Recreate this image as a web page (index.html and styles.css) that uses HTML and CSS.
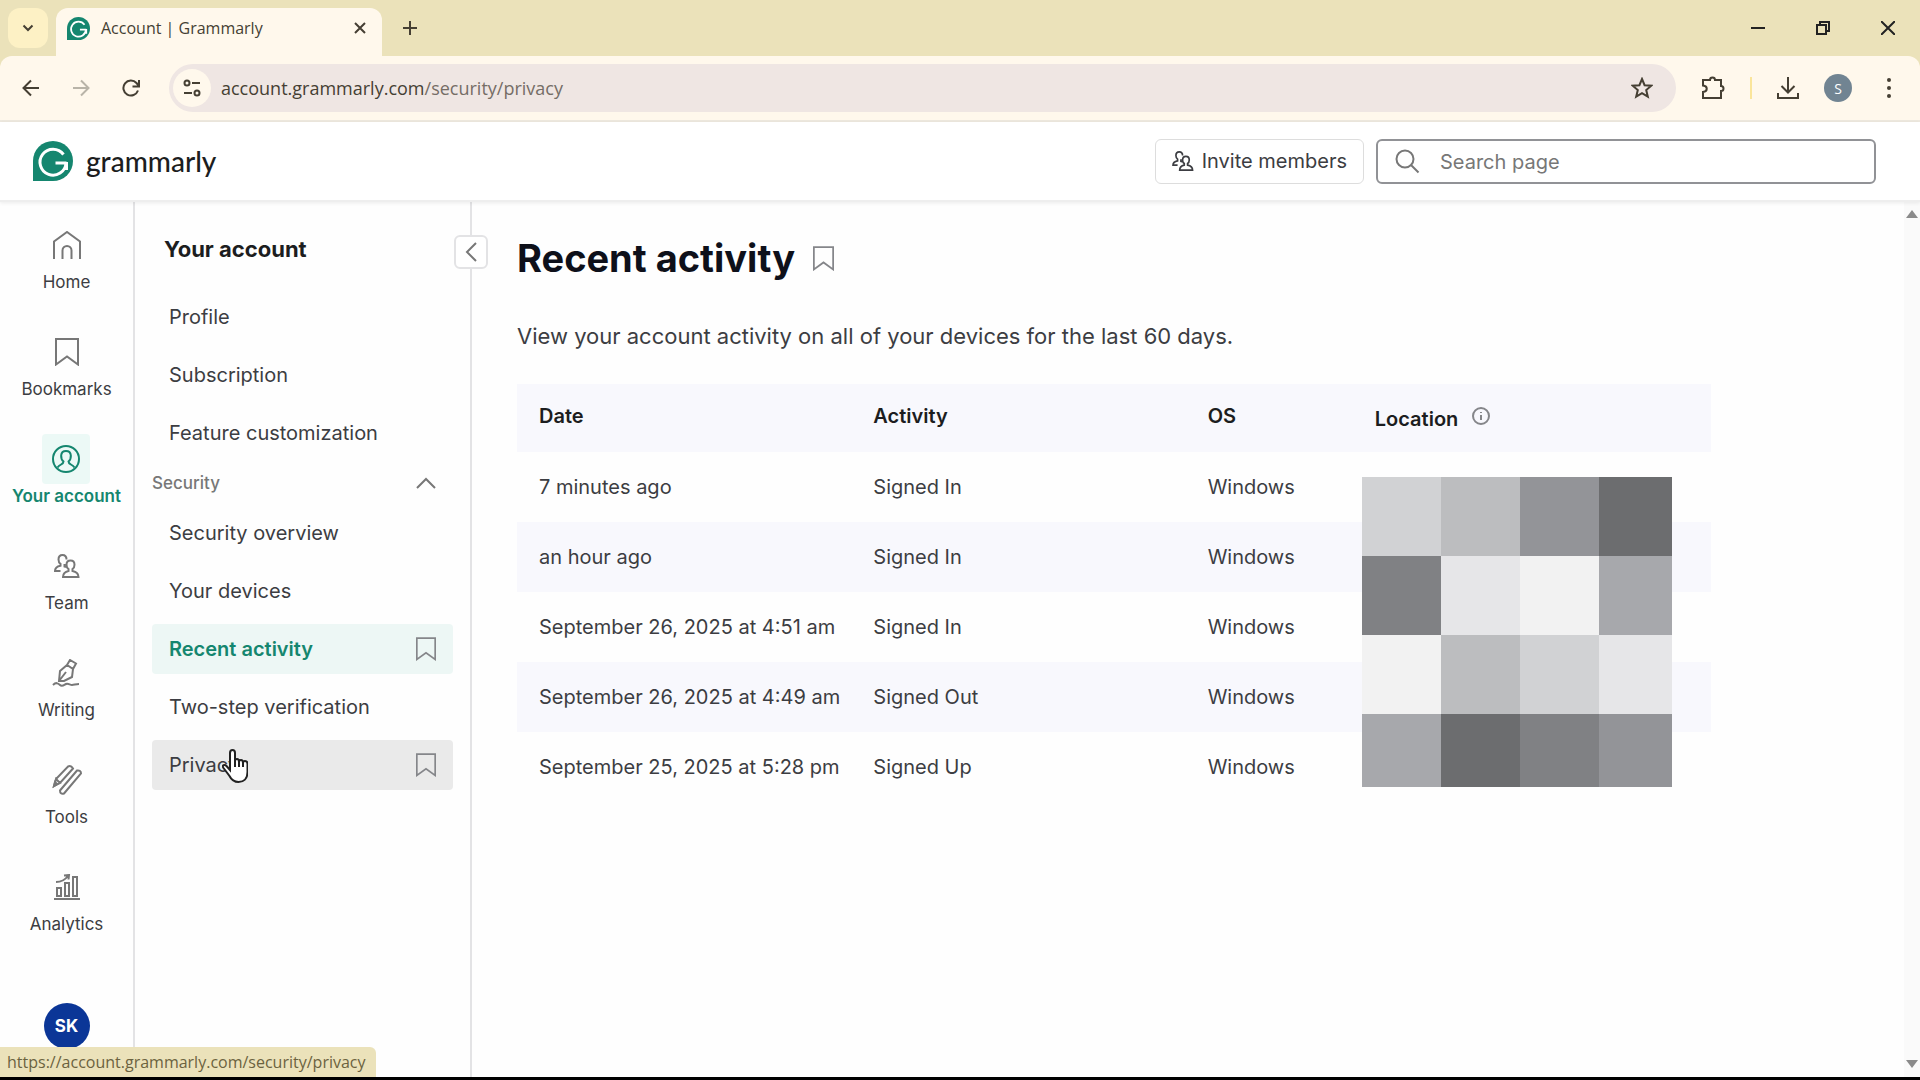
FILE: index.html
```
<!DOCTYPE html>
<html lang="en">
  <head>
    <meta charset="UTF-8" />
    <meta name="viewport" content="width=device-width, initial-scale=1.0" />
    <title>Account | Grammarly</title>
    <link rel="stylesheet" href="styles.css">
  </head>
  <body>
    <!-- shared icons -->
    <svg class="sprite" aria-hidden="true">
      <symbol id="logo" viewBox="0 0 40 40">
        <path d="M0 40V20a20 20 0 1 1 20 20z" fill="#15866f" stroke="none" />
        <path
          d="M30.500 13.500A13 13 0 1 0 33 22M22.500 22H33.500M33.500 21v8"
          fill="none"
          stroke="#fff"
          stroke-width="3"
        />
      </symbol>
      <symbol id="bookmark" viewBox="0 0 24 28">
        <path d="M1 1h22v25.500l-11-8-11 8z" />
      </symbol>
      <symbol id="team" viewBox="0 0 26 24">
        <path d="M12.500 5.500C12.500 2.500 11 1 8.500 1S4.500 2.500 4.500 5.500c0 2 .8 3.500 2 4.300v2C3 12.500 1 14 1 17h5.500M16.500 6.500c-2.600 0-4 1.600-4 4.300 0 2.200.8 3.500 2 4.200v2c-3.500.7-5.500 2.500-5.500 6h15.500c0-3.500-2.500-5.300-6-6v-2c1.200-.7 2-2 2-4.200 0-2.700-1.400-4.300-4-4.300zM10.500 10v2.500l1.500.5" />
      </symbol>
    </svg>

    <div class="browser">
      <div class="tabstrip">
        <button class="tab-search" aria-label="Search tabs">
          <svg width="12" height="8" viewBox="0 0 12 8"><path d="M1.500 1.500 6 6l4.500-4.500" /></svg>
        </button>
        <div class="tab">
          <svg class="favicon" width="23" height="23"><use href="#logo" /></svg>
          <span class="tab-title">Account | Grammarly</span>
          <button class="tab-close" aria-label="Close tab">
            <svg width="12" height="12" viewBox="0 0 12 12"><path d="M1 1l10 10M11 1 1 11" /></svg>
          </button>
        </div>
        <button class="new-tab" aria-label="New tab">
          <svg width="16" height="16" viewBox="0 0 16 16"><path d="M8 1v14M1 8h14" /></svg>
        </button>
        <div class="window-controls">
          <button aria-label="Minimize">
            <svg width="14" height="14" viewBox="0 0 14 14"><path d="M0 7h14" /></svg>
          </button>
          <button aria-label="Restore">
            <svg width="14" height="14" viewBox="0 0 14 14"><path d="M1 4h9v9H1zM4 4V1h9v9h-3" /></svg>
          </button>
          <button aria-label="Close">
            <svg width="14" height="14" viewBox="0 0 14 14"><path d="M0 0l14 14M14 0 0 14" /></svg>
          </button>
        </div>
      </div>

      <div class="toolbar">
        <div class="nav-buttons">
          <button aria-label="Back">
            <svg width="18" height="18" viewBox="0 0 18 18"><path d="M17 9H2M9 1.500 1.500 9 9 16.500" /></svg>
          </button>
          <button class="forward" aria-label="Forward">
            <svg width="18" height="18" viewBox="0 0 18 18"><path d="M1 9h15M9 1.500 16.500 9 9 16.500" /></svg>
          </button>
          <button aria-label="Reload">
            <svg width="18" height="18" viewBox="0 0 18 18"><path d="M16 11.500A7.500 7.500 0 1 1 14.500 4L17 7M17 1v6.500h-6.500" /></svg>
          </button>
        </div>
        <div class="address">
          <button class="site-info" aria-label="View site information">
            <svg width="18" height="18" viewBox="0 0 18 18"><circle cx="4" cy="4" r="2.500" /><path d="M9 4h8M1 14h8" /><circle cx="14" cy="14" r="2.500" /></svg>
          </button>
          <span class="url">account.grammarly.com<span class="path">/security/privacy</span></span>
          <button class="star" aria-label="Bookmark this tab">
            <svg width="22" height="22" viewBox="0 0 22 22"><path d="M11 2l2.600 6.200 6.700.5-5.100 4.400 1.600 6.500-5.800-3.500-5.800 3.500 1.600-6.500-5.100-4.400 6.700-.5z" /></svg>
          </button>
        </div>
        <div class="toolbar-actions">
          <button aria-label="Extensions">
            <svg width="25" height="24" viewBox="0 0 25 24"><path d="M2 4h7a2.500 2.500 0 0 1 5 0h6v6a2.500 2.500 0 0 1 0 5v7H2v-6c5-.5 5-6 0-6.500z" /></svg>
          </button>
          <span class="divider"></span>
          <button aria-label="Downloads">
            <svg width="24" height="24" viewBox="0 0 24 24"><path d="M12 1v15M5.500 10l6.500 6.500 6.500-6.500M2 17v5h20v-5" /></svg>
          </button>
          <button class="profile" aria-label="Profile">S</button>
          <button aria-label="Menu">
            <svg class="dots" width="6" height="22" viewBox="0 0 6 22"><circle cx="3" cy="3" r="2" /><circle cx="3" cy="11" r="2" /><circle cx="3" cy="19" r="2" /></svg>
          </button>
        </div>
      </div>
    </div>

    <header class="header">
      <a class="brand" href="#">
        <svg width="40" height="40"><use href="#logo" /></svg>
        <span>grammarly</span>
      </a>
      <div class="header-actions">
        <button class="invite">
          <svg width="22" height="20"><use href="#team" /></svg>
          Invite members
        </button>
        <label class="search">
          <svg width="25" height="25" viewBox="0 0 25 25"><circle cx="10" cy="10" r="8.500" /><path d="M16 16l7.500 7.500" /></svg>
          <input type="text" placeholder="Search page" aria-label="Search page" />
        </label>
      </div>
    </header>

    <div class="layout">
      <nav class="rail">
        <a href="#">
          <span class="rail-icon"><svg width="28" height="28" viewBox="0 0 28 28"><path d="M1 28V10.500L14 1l13 9.500V28M9.500 28v-8.500a4.500 4.500 0 0 1 9 0V28" /></svg></span>
          Home
        </a>
        <a href="#">
          <span class="rail-icon"><svg width="24" height="28"><use href="#bookmark" /></svg></span>
          Bookmarks
        </a>
        <a href="#" class="active">
          <span class="rail-icon"><svg width="28" height="28" viewBox="0 0 28 28"><circle cx="14" cy="14" r="13" /><path d="M14 6c-6.500 0-5.500 8-2.500 10.500 0 3-3.500 2.500-6 6M14 6c6.500 0 5.500 8 2.500 10.500 0 3 3.500 2.500 6 6" /></svg></span>
          Your account
        </a>
        <a href="#">
          <span class="rail-icon"><svg width="26" height="24"><use href="#team" /></svg></span>
          Team
        </a>
        <a href="#">
          <span class="rail-icon"><svg width="28" height="28" viewBox="0 0 28 28"><path d="M7 22 8 12l7-6 6 4-1 8-8 4zM7 22l7-9M15 6l3-5 6 3.500-3 5.500M1 26c3-3 5-2 7 0s4 0 6-1 4 1 6 1 4-1 7-1" /></svg></span>
          Writing
        </a>
        <a href="#">
          <span class="rail-icon"><svg width="30" height="30" viewBox="0 0 30 30"><path d="M2 21 4 14 16 1.500q3-1.500 5 2L8 18zM2 21l2-7 4 4zM8 25.500 25 5.500q4-.5 4 3L12 28.500q-4 1-4-3z" /><path d="M2 21l1-4 2 2z" fill="#777" /></svg></span>
          Tools
        </a>
        <a href="#">
          <span class="rail-icon"><svg width="26" height="26" viewBox="0 0 26 26"><path d="M0 25h26M3 14h4v8H3zM11 9h4v13h-4zM19 3h4v19h-4zM2 8c5 0 9-2 12-6M10 1.500l5-.5-.5 4.500" /></svg></span>
          Analytics
        </a>
        <button class="avatar">SK</button>
      </nav>

      <nav class="subnav">
        <button class="collapse" aria-label="Collapse menu">
          <svg width="12" height="20" viewBox="0 0 12 20"><path d="M11 1 2 10l9 9" /></svg>
        </button>
        <h2>Your account</h2>
        <div class="links">
          <a href="#">Profile</a>
          <a href="#">Subscription</a>
          <a href="#">Feature customization</a>
        </div>
        <button class="section">
          Security
          <svg width="20" height="12" viewBox="0 0 20 12"><path d="M1 11l9-9 9 9" /></svg>
        </button>
        <div class="links">
          <a href="#">Security overview</a>
          <a href="#">Your devices</a>
          <a href="#" class="current">
            Recent activity
            <svg width="20" height="24"><use href="#bookmark" /></svg>
          </a>
          <a href="#">Two-step verification</a>
          <a href="#" class="hovered">
            Privacy
            <svg width="20" height="24"><use href="#bookmark" /></svg>
            <svg class="pointer" width="26" height="34" viewBox="0 0 26 34">
              <path
                d="M8 21V4q0-3 2.500-3T13 4v8q0-2 2-2t2 3q0-2 2-2t2 3q0-2 2-2 2.500 0 2.500 3v8c0 7-4 10-9 10s-7-2-9-6l-6-8c-2-3 1-4 3-2z"
                fill="#fff"
                stroke="#222"
              />
              <path d="M13 12v6M17 13v5M21 14v4" stroke="#222" />
            </svg>
          </a>
        </div>
      </nav>

      <main class="content">
        <div class="title">
          <h1>Recent activity</h1>
          <button aria-label="Bookmark page">
            <svg width="21" height="25"><use href="#bookmark" /></svg>
          </button>
        </div>
        <p class="intro">View your account activity on all of your devices for the last 60 days.</p>
        <div class="activity">
          <table>
            <thead>
              <tr>
                <th class="col-date">Date</th>
                <th class="col-activity">Activity</th>
                <th class="col-os">OS</th>
                <th>
                  <span class="location">
                    Location
                    <svg width="18" height="18" viewBox="0 0 18 18"><circle cx="9" cy="9" r="8" /><path d="M9 8v5M9 5v1" /></svg>
                  </span>
                </th>
              </tr>
            </thead>
            <tbody>
              <tr><td>7 minutes ago</td><td>Signed In</td><td>Windows</td><td></td></tr>
              <tr><td>an hour ago</td><td>Signed In</td><td>Windows</td><td></td></tr>
              <tr><td>September 26, 2025 at 4:51 am</td><td>Signed In</td><td>Windows</td><td></td></tr>
              <tr><td>September 26, 2025 at 4:49 am</td><td>Signed Out</td><td>Windows</td><td></td></tr>
              <tr><td>September 25, 2025 at 5:28 pm</td><td>Signed Up</td><td>Windows</td><td></td></tr>
            </tbody>
          </table>
          <!-- hides the locations -->
          <div class="mosaic">
            <i class="g3"></i><i class="g4"></i><i class="g6"></i><i class="g8"></i>
            <i class="g7"></i><i class="g2"></i><i class="g1"></i><i class="g5"></i>
            <i class="g1"></i><i class="g4"></i><i class="g3"></i><i class="g2"></i>
            <i class="g5"></i><i class="g8"></i><i class="g7"></i><i class="g6"></i>
          </div>
        </div>
      </main>

      <div class="scrollbar">
        <svg width="12" height="8" viewBox="0 0 12 8"><path d="M0 8l6-8 6 8z" /></svg>
        <svg width="12" height="8" viewBox="0 0 12 8"><path d="M0 0l6 8 6-8z" /></svg>
      </div>
    </div>

    <div class="status">https://account.grammarly.com/security/privacy</div>
  </body>
</html>
```
FILE: styles.css
```
* {
  box-sizing: border-box;
}
body {
  margin: 0;
  height: 100vh;
  display: flex;
  flex-direction: column;
  position: relative;
  font-family: Inter, sans-serif;
  color: #3c3d42;
  background-color: #fefefe;
  border-bottom: 3px solid #000;
  overflow: hidden;
}
svg {
  fill: none;
  stroke: currentColor;
  stroke-width: 2;
  flex-shrink: 0;
}
button {
  display: flex;
  align-items: center;
  justify-content: center;
  padding: 0;
  border: none;
  background: none;
  color: inherit;
  font-family: inherit;
  cursor: pointer;
}
a {
  color: inherit;
  text-decoration: none;
}
.sprite {
  position: absolute;
  width: 0;
  height: 0;
}

/* browser window */
.browser {
  font-family: "Open Sans", sans-serif;
  color: #453f33;
  background-color: #ebe2ba;
}
.tabstrip {
  height: 56px;
  padding: 8px 0 0 8px;
  display: flex;
}
.tab-search {
  width: 40px;
  height: 40px;
  margin-right: 8px;
  border-radius: 12px;
  background-color: #fdf1c5;
}
.tab {
  width: 326px;
  padding: 0 16px 8px 11px;
  display: flex;
  align-items: center;
  border-radius: 12px 12px 0 0;
  background-color: #fff8ec;
}
.tab-title {
  flex: 1;
  margin-left: 11px;
  font-size: 16px;
}
.new-tab {
  width: 40px;
  height: 40px;
  margin-left: 8px;
}
.window-controls {
  display: flex;
  height: 40px;
  margin-left: auto;
  color: #222;
}
.window-controls button {
  width: 65px;
}
.toolbar {
  height: 66px;
  padding: 0 28px 0 11px;
  display: flex;
  align-items: center;
  background-color: #fff8ec;
  border-radius: 12px 12px 0 0;
  border-bottom: 2px solid #eee9df;
}
.nav-buttons {
  display: flex;
  gap: 10px;
  margin-right: 18px;
}
.nav-buttons button {
  width: 40px;
  height: 40px;
}
.nav-buttons .forward {
  color: #b9b4a8;
}
.address {
  flex: 1;
  height: 48px;
  padding: 0 23px 0 4px;
  display: flex;
  align-items: center;
  border-radius: 24px;
  background-color: #efe6e3;
}
.site-info {
  width: 38px;
  height: 38px;
  border-radius: 50%;
  background-color: #fff8ec;
}
.url {
  flex: 1;
  margin-left: 10px;
  font-size: 18px;
}
.path {
  color: #756d66;
}
.toolbar-actions {
  display: flex;
  align-items: center;
  margin-left: 25px;
  gap: 24px;
}
.divider {
  width: 2px;
  height: 22px;
  background-color: #fae59b;
}
.profile {
  width: 28px;
  height: 28px;
  margin-right: 10px;
  border-radius: 50%;
  background-color: #718492;
  color: #fff;
  font-size: 14px;
}
.dots {
  fill: currentColor;
  stroke: none;
}

/* page header */
.header {
  height: 80px;
  padding: 0 44px 0 33px;
  display: flex;
  align-items: center;
  justify-content: space-between;
  background-color: #fff;
  border-bottom: 2px solid #eee;
  box-shadow: 0 1px 4px rgba(0, 0, 0, 0.08);
  z-index: 1;
}
.brand {
  display: flex;
  align-items: center;
  gap: 13px;
  font-family: Lato, sans-serif;
  font-size: 28px;
  line-height: 40px;
  font-weight: 500;
  color: #1c1d20;
}
.header-actions {
  display: flex;
  gap: 12px;
}
.invite {
  height: 45px;
  padding: 0 16px;
  gap: 8px;
  border: 1px solid #ddd;
  border-radius: 6px;
  background-color: #fff;
  font-size: 20px;
}
.search {
  width: 500px;
  height: 45px;
  padding: 0 17px;
  display: flex;
  align-items: center;
  gap: 20px;
  border: 2px solid #919296;
  border-radius: 6px;
  color: #777;
}
.search input {
  flex: 1;
  min-width: 0;
  padding: 2px 0 0;
  border: none;
  outline: none;
  background: none;
  font-family: inherit;
  font-size: 20px;
}
.search input::placeholder {
  color: #777;
}

/* sidebars */
.layout {
  flex: 1;
  min-height: 0;
  display: flex;
}
.rail {
  width: 135px;
  padding: 18px 0 28px;
  display: flex;
  flex-direction: column;
  align-items: center;
  gap: 20px;
  border-right: 2px solid #e3e3e5;
  font-size: 17px;
}
.rail a {
  height: 87px;
  display: flex;
  flex-direction: column;
  align-items: center;
  line-height: 24px;
}
.rail-icon {
  width: 48px;
  height: 50px;
  display: flex;
  align-items: center;
  justify-content: center;
  border-radius: 4px;
  color: #777;
}
.rail .active {
  color: #15866f;
  font-weight: 600;
}
.active .rail-icon {
  color: #15866f;
  background-color: #ecf9f6;
}
.avatar {
  width: 46px;
  height: 46px;
  flex-shrink: 0;
  margin-top: auto;
  border-radius: 50%;
  background-color: #0b3697;
  color: #fff;
  font-size: 17px;
  font-weight: 700;
}
.subnav {
  position: relative;
  width: 337px;
  padding: 32px 17px 0;
  border-right: 2px solid #e3e3e5;
  font-size: 20px;
}
.subnav h2 {
  margin: 0 0 28px 12px;
  font-size: 22px;
  font-weight: 700;
  line-height: 30px;
  color: #1c1d20;
}
.collapse {
  position: absolute;
  top: 33px;
  right: -18px;
  width: 34px;
  height: 34px;
  border: 2px solid #e3e3e5;
  border-radius: 6px;
  background-color: #fff;
  color: #777;
}
.links {
  display: flex;
  flex-direction: column;
  gap: 8px;
}
.links a {
  position: relative;
  height: 50px;
  padding: 0 17px;
  display: flex;
  align-items: center;
  justify-content: space-between;
  border-radius: 4px;
}
.links svg {
  color: #85868a;
}
.links .current {
  color: #15866f;
  font-weight: 600;
  background-color: #edf7f5;
}
.links .hovered {
  background-color: #eaeaea;
}
.links .pointer {
  position: absolute;
  left: 70px;
  top: 9px;
}
.section {
  width: 100%;
  height: 50px;
  padding-right: 17px;
  justify-content: space-between;
  font-size: 17px;
  font-weight: 500;
  color: #777;
}

/* recent activity */
.content {
  flex: 1;
  padding: 30px 45px 0;
}
.title {
  display: flex;
  align-items: center;
  gap: 18px;
}
.title h1 {
  margin: 0;
  font-size: 38px;
  line-height: 52px;
  font-weight: 700;
  color: #0e101a;
}
.title button {
  color: #85868a;
}
.intro {
  margin: 34px 0 30px;
  font-size: 22px;
  line-height: 36px;
}
.activity {
  position: relative;
  max-width: 1194px;
}
table {
  width: 100%;
  table-layout: fixed;
  border-collapse: collapse;
}
th,
td {
  height: 70px;
  padding: 0 0 0 22px;
  text-align: left;
  font-size: 20px;
  white-space: nowrap;
}
th {
  height: 68px;
  padding-bottom: 4px;
  font-weight: 600;
  color: #1c1d20;
  background-color: #f8f8fd;
}
.col-date,
.col-activity {
  width: 28%;
}
.col-os {
  width: 14%;
}
.location {
  padding-top: 6px;
  display: flex;
  align-items: flex-start;
  gap: 14px;
}
.location svg {
  color: #85868a;
}
tbody tr:nth-child(even) {
  background-color: #f8f8fd;
}
.mosaic {
  position: absolute;
  top: 93px;
  right: 39px;
  display: grid;
  grid-template-columns: 79px 79px 79px 73px;
  grid-template-rows: 79px 79px 79px 73px;
}
.g1 { background-color: #f2f2f2; }
.g2 { background-color: #e6e6e8; }
.g3 { background-color: #d1d2d4; }
.g4 { background-color: #bcbdbf; }
.g5 { background-color: #a7a8ac; }
.g6 { background-color: #939498; }
.g7 { background-color: #808184; }
.g8 { background-color: #6c6d6f; }

.scrollbar {
  width: 16px;
  padding: 8px 0 9px;
  display: flex;
  flex-direction: column;
  align-items: center;
  justify-content: space-between;
  background-color: #fafafa;
}
.scrollbar svg {
  fill: #8a8a8a;
  stroke: none;
}
.status {
  position: absolute;
  left: 0;
  bottom: 0;
  height: 30px;
  padding: 0 10px 0 7px;
  border-radius: 0 6px 0 0;
  background-color: #ebe2ba;
  color: #6b6240;
  font-family: "Open Sans", sans-serif;
  font-size: 16px;
  line-height: 30px;
}
```
